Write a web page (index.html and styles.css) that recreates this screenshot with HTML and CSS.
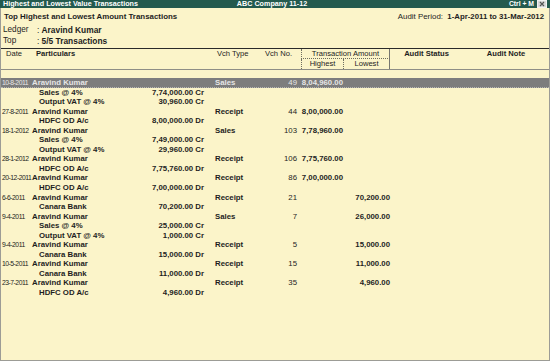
FILE: index.html
```html
<!DOCTYPE html>
<html lang="en">
<head>
    <meta charset="UTF-8">
    <title>Highest and Lowest Value Transactions</title>
    <link rel="stylesheet" href="styles.css">
</head>
<body>
    <div class="titlebar">
        <span class="tb-left">Highest and Lowest Value Transactions</span>
        <span class="tb-center">ABC Company 11-12</span>
        <span class="tb-right">Ctrl + M
            <svg class="close" width="10" height="8" viewBox="0 0 10 8">
                <rect x="0.5" y="0.5" width="9" height="7" fill="#d9d9d9" stroke="#f2f2f2"/>
                <path d="M3 2 L7 6 M7 2 L3 6" stroke="#555" stroke-width="1.2"/>
            </svg>
        </span>
    </div>

    <div class="report">
        <div class="report-head">
            <div class="report-title">Top Highest and Lowest Amount Transactions</div>
            <div class="period">Audit Period:&nbsp; <b>1-Apr-2011 to 31-Mar-2012</b></div>
        </div>
        <div class="info"><span class="label">Ledger</span><span>: <b>Aravind Kumar</b></span></div>
        <div class="info"><span class="label">Top</span><span>: <b>5/5 Transactions</b></span></div>

        <div class="cols">
            <div class="h-date">Date</div>
            <div class="h-part">Particulars</div>
            <div class="h-type">Vch Type</div>
            <div class="h-no">Vch No.</div>
            <div class="h-amount">Transaction Amount</div>
            <div class="h-high">Highest</div>
            <div class="h-low">Lowest</div>
            <div class="h-status">Audit Status</div>
            <div class="h-note">Audit Note</div>
        </div>

        <div class="rows">
            <div class="row selected"><span class="c-date">10-8-2011</span><span class="c-part">Aravind Kumar</span><span class="c-type">Sales</span><span class="c-no">49</span><span class="c-high">8,04,960.00</span></div>
            <div class="row sub"><span class="c-part"><span>Sales @ 4%</span><span>7,74,000.00 Cr</span></span></div>
            <div class="row sub"><span class="c-part"><span>Output VAT @ 4%</span><span>30,960.00 Cr</span></span></div>

            <div class="row"><span class="c-date">27-8-2011</span><span class="c-part">Aravind Kumar</span><span class="c-type">Receipt</span><span class="c-no">44</span><span class="c-high">8,00,000.00</span></div>
            <div class="row sub"><span class="c-part"><span>HDFC OD A/c</span><span>8,00,000.00 Dr</span></span></div>

            <div class="row"><span class="c-date">18-1-2012</span><span class="c-part">Aravind Kumar</span><span class="c-type">Sales</span><span class="c-no">103</span><span class="c-high">7,78,960.00</span></div>
            <div class="row sub"><span class="c-part"><span>Sales @ 4%</span><span>7,49,000.00 Cr</span></span></div>
            <div class="row sub"><span class="c-part"><span>Output VAT @ 4%</span><span>29,960.00 Cr</span></span></div>

            <div class="row"><span class="c-date">28-1-2012</span><span class="c-part">Aravind Kumar</span><span class="c-type">Receipt</span><span class="c-no">106</span><span class="c-high">7,75,760.00</span></div>
            <div class="row sub"><span class="c-part"><span>HDFC OD A/c</span><span>7,75,760.00 Dr</span></span></div>

            <div class="row"><span class="c-date">20-12-2011</span><span class="c-part">Aravind Kumar</span><span class="c-type">Receipt</span><span class="c-no">86</span><span class="c-high">7,00,000.00</span></div>
            <div class="row sub"><span class="c-part"><span>HDFC OD A/c</span><span>7,00,000.00 Dr</span></span></div>

            <div class="row"><span class="c-date">6-6-2011</span><span class="c-part">Aravind Kumar</span><span class="c-type">Receipt</span><span class="c-no">21</span><span class="c-low">70,200.00</span></div>
            <div class="row sub"><span class="c-part"><span>Canara Bank</span><span>70,200.00 Dr</span></span></div>

            <div class="row"><span class="c-date">9-4-2011</span><span class="c-part">Aravind Kumar</span><span class="c-type">Sales</span><span class="c-no">7</span><span class="c-low">26,000.00</span></div>
            <div class="row sub"><span class="c-part"><span>Sales @ 4%</span><span>25,000.00 Cr</span></span></div>
            <div class="row sub"><span class="c-part"><span>Output VAT @ 4%</span><span>1,000.00 Cr</span></span></div>

            <div class="row"><span class="c-date">9-4-2011</span><span class="c-part">Aravind Kumar</span><span class="c-type">Receipt</span><span class="c-no">5</span><span class="c-low">15,000.00</span></div>
            <div class="row sub"><span class="c-part"><span>Canara Bank</span><span>15,000.00 Dr</span></span></div>

            <div class="row"><span class="c-date">10-5-2011</span><span class="c-part">Aravind Kumar</span><span class="c-type">Receipt</span><span class="c-no">15</span><span class="c-low">11,000.00</span></div>
            <div class="row sub"><span class="c-part"><span>Canara Bank</span><span>11,000.00 Dr</span></span></div>

            <div class="row"><span class="c-date">23-7-2011</span><span class="c-part">Aravind Kumar</span><span class="c-type">Receipt</span><span class="c-no">35</span><span class="c-low">4,960.00</span></div>
            <div class="row sub"><span class="c-part"><span>HDFC OD A/c</span><span>4,960.00 Dr</span></span></div>
        </div>
    </div>
</body>
</html>
```

FILE: styles.css
```css
* {
    box-sizing: border-box;
}
body {
    margin: 0;
    width: 550px;
    background-color: #ffffff;
    font-family: "Liberation Sans", Arial, sans-serif;
    color: #1e1e1e;
}
.titlebar {
    height: 8px;
    background-color: #245a4e;
    color: #ffffff;
    font-size: 7.2px;
    font-weight: bold;
    display: grid;
    grid-template-columns: 1fr auto 1fr;
    align-items: center;
    padding: 0 3px 0 3px;
    line-height: 8px;
}
.tb-center {
    margin-left: -6px;
}
.tb-right {
    justify-self: end;
    display: flex;
    align-items: center;
    gap: 3px;
    font-size: 6.8px;
}
.close {
    display: block;
}
.report {
    height: 353px;
    background-color: #fbf4c9;
    border: 1px solid #9c9c96;
    border-top: 0;
}
.report-head {
    display: flex;
    justify-content: space-between;
    align-items: center;
    height: 16px;
    padding: 0 5px 0 3px;
    font-size: 7.9px;
}
.report-title {
    font-weight: bold;
    font-size: 7.9px;
}
.period b {
    font-size: 7.8px;
}
.info {
    display: flex;
    height: 11px;
    align-items: center;
    padding-left: 2px;
    font-size: 8.2px;
}
.info:first-of-type {
    margin-top: 2px;
}
.info .label {
    width: 34px;
}
.info b {
    font-size: 8.4px;
}
.cols {
    margin-top: 2px;
    display: grid;
    grid-template-columns: 30px 183px 56px 31px 43px 46px 73px 1fr;
    grid-template-rows: 10px 10px;
    border-top: 1px solid #2a2a2a;
    border-bottom: 1px solid #8e8e86;
    font-size: 7.6px;
    line-height: 10px;
}
.h-date {
    padding-left: 5px;
}
.h-part {
    padding-left: 5px;
    font-weight: bold;
}
.h-type {
    padding-left: 3px;
}
.h-no {
    text-align: right;
    padding-right: 9px;
    margin-left: -10px;
}
.h-amount {
    grid-column: 5 / 7;
    text-align: center;
    border-left: 1px dotted #6e6e60;
    border-right: 1px solid #777770;
    border-bottom: 1px dotted #6e6e60;
}
.h-high {
    grid-column: 5;
    grid-row: 2;
    text-align: center;
    border-left: 1px dotted #6e6e60;
    border-right: 1px dotted #6e6e60;
}
.h-low {
    grid-column: 6;
    grid-row: 2;
    text-align: center;
    border-right: 1px solid #777770;
}
.h-status,
.h-note {
    text-align: center;
    font-weight: bold;
    grid-row: 1;
}
.h-status {
    grid-column: 7;
}
.h-note {
    grid-column: 8;
}
.rows {
    margin-top: 8px;
}
.row {
    display: grid;
    grid-template-columns: 30px 183px 56px 31px 43px 46px 73px 1fr;
    height: 9.56px;
    line-height: 9.56px;
    font-size: 7.8px;
    font-weight: bold;
    white-space: nowrap;
}
.row.selected {
    background-color: #7d7d7d;
    color: #e6e6e6;
    border-bottom: 1px dotted #b5b5b5;
}
.c-date {
    grid-column: 1;
    font-size: 6.8px;
    font-weight: normal;
    letter-spacing: -0.5px;
    padding-left: 1px;
}
.c-part {
    grid-column: 2;
    padding-left: 1px;
}
.row.sub .c-part {
    display: flex;
    justify-content: space-between;
    padding-left: 8px;
    padding-right: 10px;
}
.c-type {
    grid-column: 3;
    padding-left: 1px;
}
.c-no {
    grid-column: 4;
    text-align: right;
    padding-right: 4px;
    font-weight: normal;
}
.c-high {
    grid-column: 5;
    text-align: right;
    padding-right: 1px;
}
.c-low {
    grid-column: 6;
    text-align: right;
}
```
